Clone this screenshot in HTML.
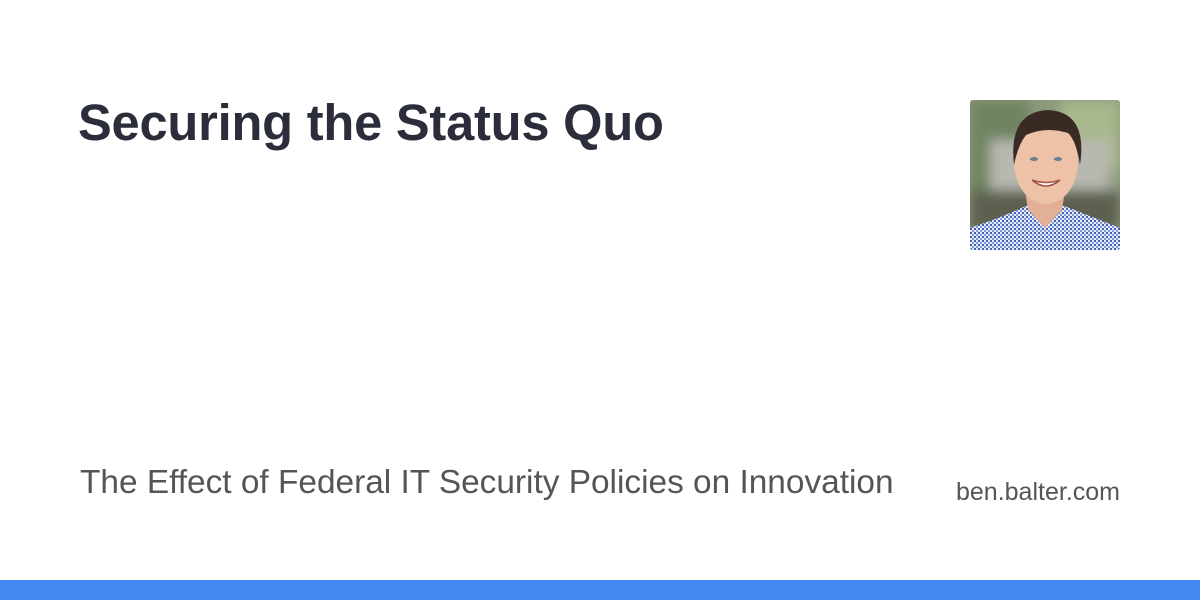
<!DOCTYPE html>
<html><head><style>
html,body{margin:0;padding:0}
body{width:1200px;height:600px;position:relative;background:#fff;font-family:"Liberation Sans",Arial,sans-serif;overflow:hidden}
.t{position:absolute;left:78px;top:93px;font-size:50.6px;font-weight:bold;color:#2b2d3a;white-space:nowrap;letter-spacing:-0.2px}
.s{position:absolute;left:80px;top:464px;font-size:33.4px;color:#555;white-space:nowrap}
.u{position:absolute;right:80px;top:478px;font-size:25px;color:#555;white-space:nowrap}
.bar{position:absolute;left:0;top:580px;width:1200px;height:20px;background:#4688f1}
.p{position:absolute;left:970px;top:100px;width:150px;height:150px;border-radius:3px;overflow:hidden}
</style></head><body>
<div class="t">Securing the Status Quo</div>
<div class="p"><svg width="150" height="150" viewBox="0 0 150 150">
<defs><filter id="b"><feGaussianBlur stdDeviation="6"/></filter>
<pattern id="c" width="4" height="4" patternUnits="userSpaceOnUse"><rect width="4" height="4" fill="#e8ecf6"/><rect width="2" height="2" fill="#3d5fb8"/><rect x="2" y="2" width="2" height="2" fill="#7f96d4"/></pattern></defs>
<rect width="150" height="150" fill="#8a9a7c"/>
<g filter="url(#b)"><rect x="0" y="0" width="60" height="150" fill="#6f8460"/><rect x="90" y="0" width="60" height="70" fill="#a9b88d"/><rect x="20" y="40" width="120" height="60" fill="#b7b8b0"/><rect x="0" y="90" width="150" height="40" fill="#5d6150"/></g>
<path d="M0 150 L0 128 Q30 118 58 105 L75 125 L92 105 Q125 118 150 128 L150 150Z" fill="url(#c)"/>
<path d="M55 90 L58 110 L75 128 L92 110 L95 90Z" fill="#e2b096"/>
<ellipse cx="76" cy="62" rx="32" ry="42" fill="#edc2a6"/>
<path d="M44 65 Q38 12 78 10 Q118 12 110 65 Q106 40 98 33 Q76 26 56 35 Q48 45 44 65Z" fill="#3a2a24"/>
<path d="M62 80 Q76 92 90 80 Q76 85 62 80Z" fill="#fff" stroke="#a5524a" stroke-width="1.5"/>
<ellipse cx="64" cy="59" rx="4" ry="2" fill="#6a7d8c"/><ellipse cx="88" cy="59" rx="4" ry="2" fill="#6a7d8c"/>
</svg></div>
<div class="s">The Effect of Federal IT Security Policies on Innovation</div>
<div class="u">ben.balter.com</div>
<div class="bar"></div>
</body></html>
